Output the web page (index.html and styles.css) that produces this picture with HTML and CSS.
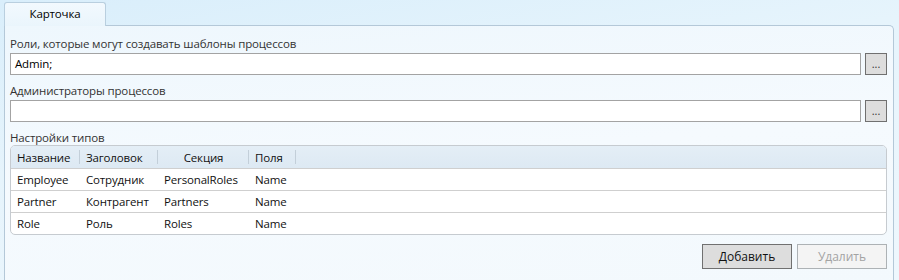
FILE: index.html
```html
<!DOCTYPE html>
<html lang="ru">
<head>
    <meta charset="UTF-8">
    <title>Карточка</title>
    <link rel="stylesheet" href="styles.css">
</head>
<body>
    <div class="tabs">
        <div class="tab active">Карточка</div>
    </div>

    <div class="panel">
        <!-- Roles -->
        <div class="field">
            <label>Роли, которые могут создавать шаблоны процессов</label>
            <div class="picker">
                <div class="input">Admin;</div>
                <button class="btn-dots">...</button>
            </div>
        </div>

        <!-- Admins -->
        <div class="field">
            <label>Администраторы процессов</label>
            <div class="picker">
                <div class="input"></div>
                <button class="btn-dots">...</button>
            </div>
        </div>

        <!-- Types grid -->
        <div class="field types">
            <label>Настройки типов</label>
            <table class="grid">
                <thead>
                    <tr>
                        <th class="c1">Название</th>
                        <th class="c2">Заголовок</th>
                        <th class="c3">Секция</th>
                        <th class="c4">Поля</th>
                        <th class="rest"></th>
                    </tr>
                </thead>
                <tbody>
                    <tr>
                        <td>Employee</td>
                        <td>Сотрудник</td>
                        <td>PersonalRoles</td>
                        <td>Name</td>
                        <td></td>
                    </tr>
                    <tr>
                        <td>Partner</td>
                        <td>Контрагент</td>
                        <td>Partners</td>
                        <td>Name</td>
                        <td></td>
                    </tr>
                    <tr>
                        <td>Role</td>
                        <td>Роль</td>
                        <td>Roles</td>
                        <td>Name</td>
                        <td></td>
                    </tr>
                </tbody>
            </table>
        </div>

        <div class="actions">
            <button class="btn">Добавить</button>
            <button class="btn" disabled>Удалить</button>
        </div>
    </div>
</body>
</html>
```

FILE: styles.css
```css
* {
    margin: 0;
    padding: 0;
    box-sizing: border-box;
}
body {
    font-family: 'Open Sans', 'Noto Sans', sans-serif;
    font-size: 11.5px;
    letter-spacing: -0.15px;
    color: #1a1a1a;
    background: linear-gradient(170deg, #d9eefb 0%, #e6f4fc 40%, #eef7fd 100%);
    height: 280px;
    overflow: hidden;
    padding: 2px 5px 0 4px;
}
/* Tabs */
.tabs {
    display: flex;
    height: 24px;
}
.tab {
    width: 102px;
    height: 24px;
    border: 1px solid #b9cfdf;
    border-bottom: none;
    border-radius: 3px 3px 0 0;
    background: linear-gradient(#f2f9fe, #eaf5fc);
    text-align: center;
    line-height: 22px;
    color: #000;
    position: relative;
    z-index: 1;
}
/* Panel */
.panel {
    border: 1px solid #b4c8d8;
    border-bottom: none;
    border-radius: 0 5px 0 0;
    background: linear-gradient(175deg, #eef7fd 0%, #f5fafe 50%, #f3f9fd 100%);
    padding: 9px 5px 0 5px;
    height: 260px;
    margin-top: -1px;
}
.field {
    margin-bottom: 3px;
}
.field label {
    display: block;
    color: #333;
    line-height: 17px;
    margin-bottom: 1px;
}
.types label {
    margin-bottom: -1px;
}
.picker {
    display: flex;
    gap: 4px;
    height: 22px;
    margin-bottom: 7px;
}
.input {
    flex: 1;
    border: 1px solid #a3a3a3;
    background: #fff;
    padding: 0 4px;
    line-height: 20px;
    color: #000;
}
.btn-dots {
    width: 22px;
    height: 22px;
    margin-right: 1px;
    border: 1px solid #707070;
    background: #dddddd;
    font-family: inherit;
    font-size: 11px;
    line-height: 16px;
    color: #333;
}
/* Grid */
.grid {
    width: calc(100% - 1px);
    border-collapse: separate;
    border-spacing: 0;
    border: 1px solid #c6cbd0;
    border-radius: 5px;
    background: #fff;
    overflow: hidden;
}
.grid th {
    background: linear-gradient(#e4eef6, #dde9f3);
    font-weight: normal;
    text-align: left;
    height: 22px;
    padding: 0 6px;
    color: #111;
    position: relative;
}
.grid th.c3 {
    text-align: center;
}
.grid th.c1 { width: 69px; }
.grid th.c2 { width: 78px; }
.grid th.c3 { width: 91px; }
.grid th.c4 { width: 47px; }
.grid th.c1::after,
.grid th.c2::after,
.grid th.c3::after,
.grid th.c4::after {
    content: "";
    position: absolute;
    right: 0;
    top: 4px;
    bottom: 4px;
    width: 1px;
    background: #c3cfd9;
}
.grid td {
    height: 22px;
    border-top: 1px solid #cfcfcf;
    padding: 0 6px;
    color: #111;
    white-space: nowrap;
}
/* Buttons */
.actions {
    display: flex;
    justify-content: flex-end;
    gap: 5px;
    padding: 6px 1px 0 0;
}
.btn {
    width: 90px;
    height: 25px;
    border: 1px solid #707070;
    background: #dddddd;
    font-family: inherit;
    font-size: 12px;
    color: #111;
}
.btn:disabled {
    border-color: #adb2b5;
    background: #f4f4f4;
    color: #a3a3a3;
}
```
